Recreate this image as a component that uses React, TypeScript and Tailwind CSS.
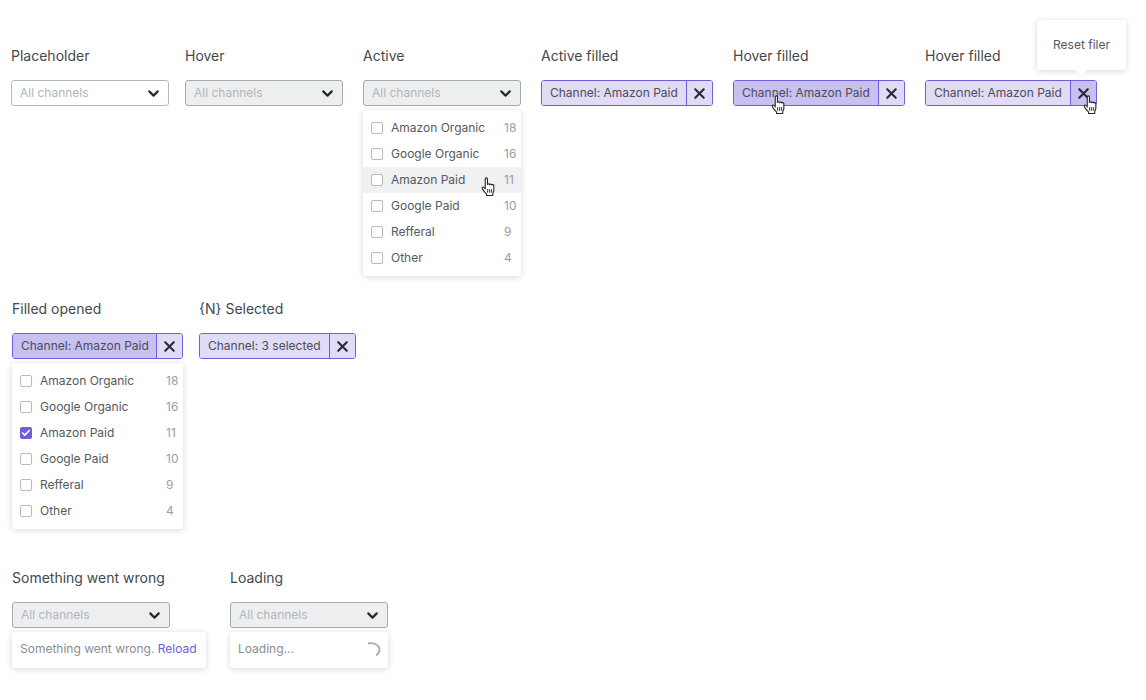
import type { ReactNode } from "react";
import { ChevronDown, X, Check } from "lucide-react";

const channels = [
  { name: "Amazon Organic", count: 18 },
  { name: "Google Organic", count: 16 },
  { name: "Amazon Paid", count: 11 },
  { name: "Google Paid", count: 10 },
  { name: "Refferal", count: 9 },
  { name: "Other", count: 4 },
];

function Label({ children }: { children: ReactNode }) {
  return <div className="mb-[15px] h-[18px] text-[14px] leading-[18px] text-[#44484c]">{children}</div>;
}

// plain closed select
function Select({ active }: { active?: boolean }) {
  return (
    <div
      className={
        "flex h-[26px] w-[158px] items-center justify-between rounded-[3px] border pl-2 pr-1.5 " +
        (active ? "border-[#a3abab] bg-[#eceef0]" : "border-[#b4bbbb] bg-white")
      }
    >
      <span className="text-[12px] text-[#b3b6b8]">All channels</span>
      <ChevronDown size={17} strokeWidth={3} className="text-[#24282c]" />
    </div>
  );
}

// the filled purple pill with the clear button
function Pill({
  text,
  width = "w-[172px]",
  mainBg = "bg-[#e0dcf8]",
  xBg = "bg-[#e0dcf8]",
}: {
  text: string;
  width?: string;
  mainBg?: string;
  xBg?: string;
}) {
  return (
    <div className={"flex h-[26px] overflow-hidden rounded-[3px] border border-[#6f5ce0] text-[12px] text-[#4a4e52] " + width}>
      <div className={"flex flex-1 items-center whitespace-nowrap border-r border-[#6f5ce0] pl-2 " + mainBg}>{text}</div>
      <div className={"flex w-[25px] items-center justify-center " + xBg}>
        <X size={17} strokeWidth={3} className="text-[#2a2e32]" />
      </div>
    </div>
  );
}

function Checkbox({ checked }: { checked?: boolean }) {
  if (checked) {
    return (
      <span className="flex h-3 w-3 items-center justify-center rounded-[2px] bg-[#6f5ce0]">
        <Check size={10} strokeWidth={4} className="text-white" />
      </span>
    );
  }
  return <span className="h-3 w-3 rounded-[2px] border border-[#b4bbbb] bg-white" />;
}

function Menu({ width, hovered, checked }: { width: string; hovered?: string; checked?: string }) {
  return (
    <div className={"mt-1 rounded-[3px] bg-white py-[5px] shadow-[0_1px_6px_rgba(0,0,0,0.16)] " + width}>
      {channels.map((c) => (
        <div
          key={c.name}
          className={
            "flex h-[26px] items-center pl-2 text-[12px] " + (hovered === c.name ? "bg-[#f0f1f2]" : "")
          }
        >
          <Checkbox checked={checked === c.name} />
          <span className="ml-2 text-[#55595d]">{c.name}</span>
          <span className="ml-auto w-[17px] text-[#9a9ea1]">{c.count}</span>
        </div>
      ))}
    </div>
  );
}

function Hand({ className }: { className: string }) {
  return (
    <svg viewBox="0 0 16 19" className={"absolute h-[21px] w-[18px] " + className}>
      <path
        d="M4.6 1.8c0-1.3 2-1.3 2 0v5c.3-.9 1.900-.9 2 .2.3-.8 1.800-.7 1.900.3.4-.7 1.800-.5 1.900.6v3.900c0 1.600-.5 2.600-1 3.400v1.600H5.800v-1.400C4.500 14.300 3.300 12.700 2 10.700c-.8-1.300.8-2.200 1.600-1.200l1 1.200z"
        fill="#fff"
        stroke="#24282c"
        strokeWidth="1"
        strokeLinejoin="round"
      />
      <path d="M6.800 11v3.200M8.600 11v3.200M10.400 11v3.200" stroke="#24282c" strokeWidth="0.9" fill="none" />
    </svg>
  );
}

export default function App() {
  return (
    <div className="h-[700px] w-[1146px] overflow-hidden bg-white font-['Inter',sans-serif]">
      {/* Row one */}
      <div className="flex h-[300px] items-start pl-[11px] pt-[47px]">
        <div>
          <Label>Placeholder</Label>
          <Select />
        </div>
        <div className="ml-4">
          <Label>Hover</Label>
          <Select active />
        </div>
        <div className="relative ml-5">
          <Label>Active</Label>
          <Select active />
          <Menu width="w-[158px]" hovered="Amazon Paid" />
          <Hand className="left-[117px] top-[130px]" />
        </div>
        <div className="ml-5">
          <Label>Active filled</Label>
          <Pill text="Channel: Amazon Paid" />
        </div>
        <div className="relative ml-5">
          <Label>Hover filled</Label>
          <Pill text="Channel: Amazon Paid" mainBg="bg-[#c7c0f0]" />
          <Hand className="left-[37px] top-[48px]" />
        </div>
        <div className="relative ml-5">
          <Label>Hover filled</Label>
          <Pill text="Channel: Amazon Paid" xBg="bg-[#c7c0f0]" />
          <Hand className="left-[157px] top-[48px]" />
          {/* Tooltip */}
          <div className="absolute left-[112px] top-[-27px] flex h-[50px] w-[89px] items-center justify-center rounded-[3px] bg-white text-[12px] text-[#55595d] shadow-[0_1px_6px_rgba(0,0,0,0.16)]">
            Reset filer
            <span className="absolute bottom-[-4px] left-[40px] h-2 w-2 rotate-45 bg-white" />
          </div>
        </div>
      </div>

      {/* Row two */}
      <div className="flex h-[269px] items-start pl-3">
        <div>
          <Label>Filled opened</Label>
          <Pill text="Channel: Amazon Paid" width="w-[171px]" mainBg="bg-[#c7c0f0]" />
          <Menu width="w-[171px]" checked="Amazon Paid" />
        </div>
        <div className="ml-4">
          <Label>{"{N} Selected"}</Label>
          <Pill text="Channel: 3 selected" width="w-[157px]" />
        </div>
      </div>

      {/* Row three */}
      <div className="flex items-start pl-3">
        <div>
          <Label>Something went wrong</Label>
          <Select active />
          <div className="mt-1 flex h-9 w-[194px] items-center rounded-[3px] bg-white px-2 pb-0.5 text-[12px] text-[#8a8e91] shadow-[0_1px_6px_rgba(0,0,0,0.16)]">
            Something went wrong.&nbsp;<span className="text-[#6f5ce0]">Reload</span>
          </div>
        </div>
        <div className="ml-6">
          <Label>Loading</Label>
          <Select active />
          <div className="mt-1 flex h-9 w-[158px] items-center justify-between rounded-[3px] bg-white pb-0.5 pl-2 pr-[7px] text-[12px] text-[#8a8e91] shadow-[0_1px_6px_rgba(0,0,0,0.16)]">
            Loading...
            <svg viewBox="0 0 14 14" className="h-[14px] w-[14px]">
              <path d="M1 1.400C6 .4 12.500 2.500 12.500 7.500c0 2.800-1.500 4.800-3.500 5.800" fill="none" stroke="#a6aaad" strokeWidth="1.800" />
            </svg>
          </div>
        </div>
      </div>
    </div>
  );
}
